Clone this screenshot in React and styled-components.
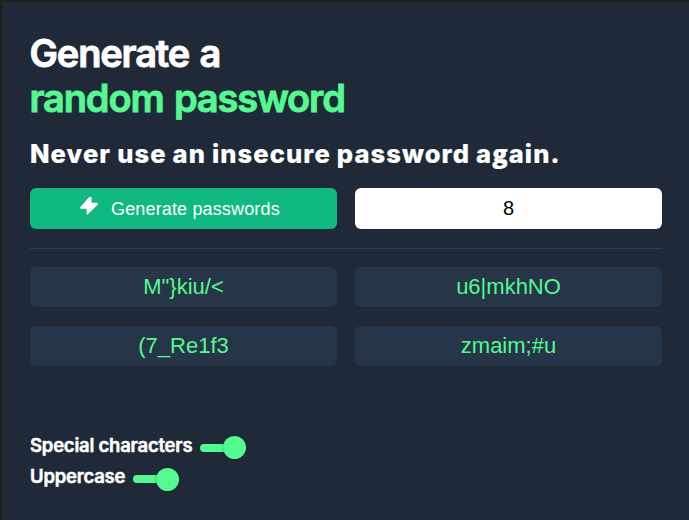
import React from "react";
import styled, { createGlobalStyle } from "styled-components";

const GlobalStyle = createGlobalStyle`
  * { box-sizing: border-box; }
  body { margin: 0; background: #1f2937; overflow: hidden; }
`;

const Page = styled.main`
  width: 689px;
  height: 520px;
  padding: 28px 27px 0 28px;
  border-top: 2px solid #1e1e1e;
  border-left: 2px solid #1e1e1e;
  background: #1f2937;
  color: #fff;
  font-family: Inter, sans-serif;
  overflow: hidden;
`;

const Title = styled.h1`
  margin: 0 0 0 -0.5px;
  padding-top: 1px;
  font-size: 38px;
  line-height: 45px;
  font-weight: 600;
  letter-spacing: -1.15px;
  word-spacing: 2px;
  -webkit-text-stroke: 0.9px currentColor;
  white-space: nowrap;
`;

const Accent = styled.span`
  display: block;
  color: #55f991;
  -webkit-text-stroke: 0.9px #55f991;
`;

const Subtitle = styled.h2`
  margin: 16px 0 0;
  height: 33px;
  font-size: 25.5px;
  line-height: 32px;
  font-weight: 800;
  letter-spacing: 1.1px;
  word-spacing: -0.7px;
  -webkit-text-stroke: 0.2px currentColor;
  white-space: nowrap;
`;

const Letter = styled.span`
  font-family: "Open Sans", sans-serif;
`;

const Grid = styled.div`
  display: grid;
  grid-template-columns: 307px 307px;
  gap: 19px 18px;
  font-family: "Liberation Sans", Arial, sans-serif;
`;

const Controls = styled(Grid)`
  margin-top: 18px;
`;

const GenerateButton = styled.button`
  display: flex;
  align-items: center;
  height: 41px;
  padding: 1px 0 0 49px;
  border: 0;
  border-radius: 6px;
  background: #10b981;
  color: #fff;
  font: 18px/21px "Liberation Sans", Arial, sans-serif;
  letter-spacing: 0.15px;
`;

const BoltIcon = styled.svg`
  width: 20px;
  height: 20px;
  margin: 0 12px 6px 0;
  fill: #fff;
`;

const LengthInput = styled.input`
  height: 41px;
  width: 100%;
  padding: 0;
  border: 0;
  border-radius: 6px;
  background: #fff;
  color: #000;
  text-align: center;
  font: 20px "Liberation Sans", Arial, sans-serif;
`;

const Divider = styled.hr`
  height: 1px;
  margin: 19px 0 18px;
  border: 0;
  background: #2f3e4e;
`;

const Password = styled.div`
  height: 40px;
  border-radius: 6px;
  background: #273549;
  color: #55f991;
  text-align: center;
  font-size: 22px;
  line-height: 39px;
`;

const Options = styled.div`
  margin-top: 64px;
`;

const Option = styled.label`
  display: flex;
  align-items: center;
  height: ${(p) => p.$height}px;
  font-size: 18.5px;
  line-height: 30px;
  font-weight: 600;
  letter-spacing: -0.22px;
  -webkit-text-stroke: 0.5px currentColor;
  white-space: nowrap;
`;

const OptionText = styled.span`
  width: ${(p) => p.$width}px;
  padding-bottom: 2px;
`;

const Toggle = styled.span`
  display: flex;
  align-items: center;
  justify-content: flex-end;
  width: 46px;
  height: 8px;
  margin-top: 4px;
  border-radius: 4px;
  background: #55f991;
`;

const Knob = styled.span`
  flex: none;
  width: 23px;
  height: 23px;
  border-radius: 50%;
  background: #55f991;
  box-shadow: 0 0 2px rgba(0, 0, 0, 0.5);
`;

const passwords = ['M"}kiu/<', "u6|mkhNO", "(7_Re1f3", "zmaim;#u"];

export default function App() {
  return (
    <>
      <GlobalStyle />
      <Page>
        <Title>
          Generate a<Accent>random password</Accent>
        </Title>
        <Subtitle>
          Never use an insecure password a<Letter>g</Letter>ain.
        </Subtitle>
        <Controls>
          <GenerateButton>
            <BoltIcon viewBox="0 0 20 20">
              <path d="M10 1.3 1.2 11.2Q.7 12.6 2 12.8H7.6V17.6Q7.8 19.2 9 18.3L18.9 8.4Q19.5 7 18.2 6.7H12.6V2.1Q12.2.1 10 1.3Z" />
            </BoltIcon>
            Generate passwords
          </GenerateButton>
          <LengthInput defaultValue="8" aria-label="Password length" />
        </Controls>
        <Divider />
        <Grid>
          {passwords.map((p) => (
            <Password key={p}>{p}</Password>
          ))}
        </Grid>
        <Options>
          <Option $height={31}>
            <OptionText $width={170}>Special characters</OptionText>
            <Toggle><Knob /></Toggle>
          </Option>
          <Option $height={32}>
            <OptionText $width={103}>Uppercase</OptionText>
            <Toggle><Knob /></Toggle>
          </Option>
        </Options>
      </Page>
    </>
  );
}
